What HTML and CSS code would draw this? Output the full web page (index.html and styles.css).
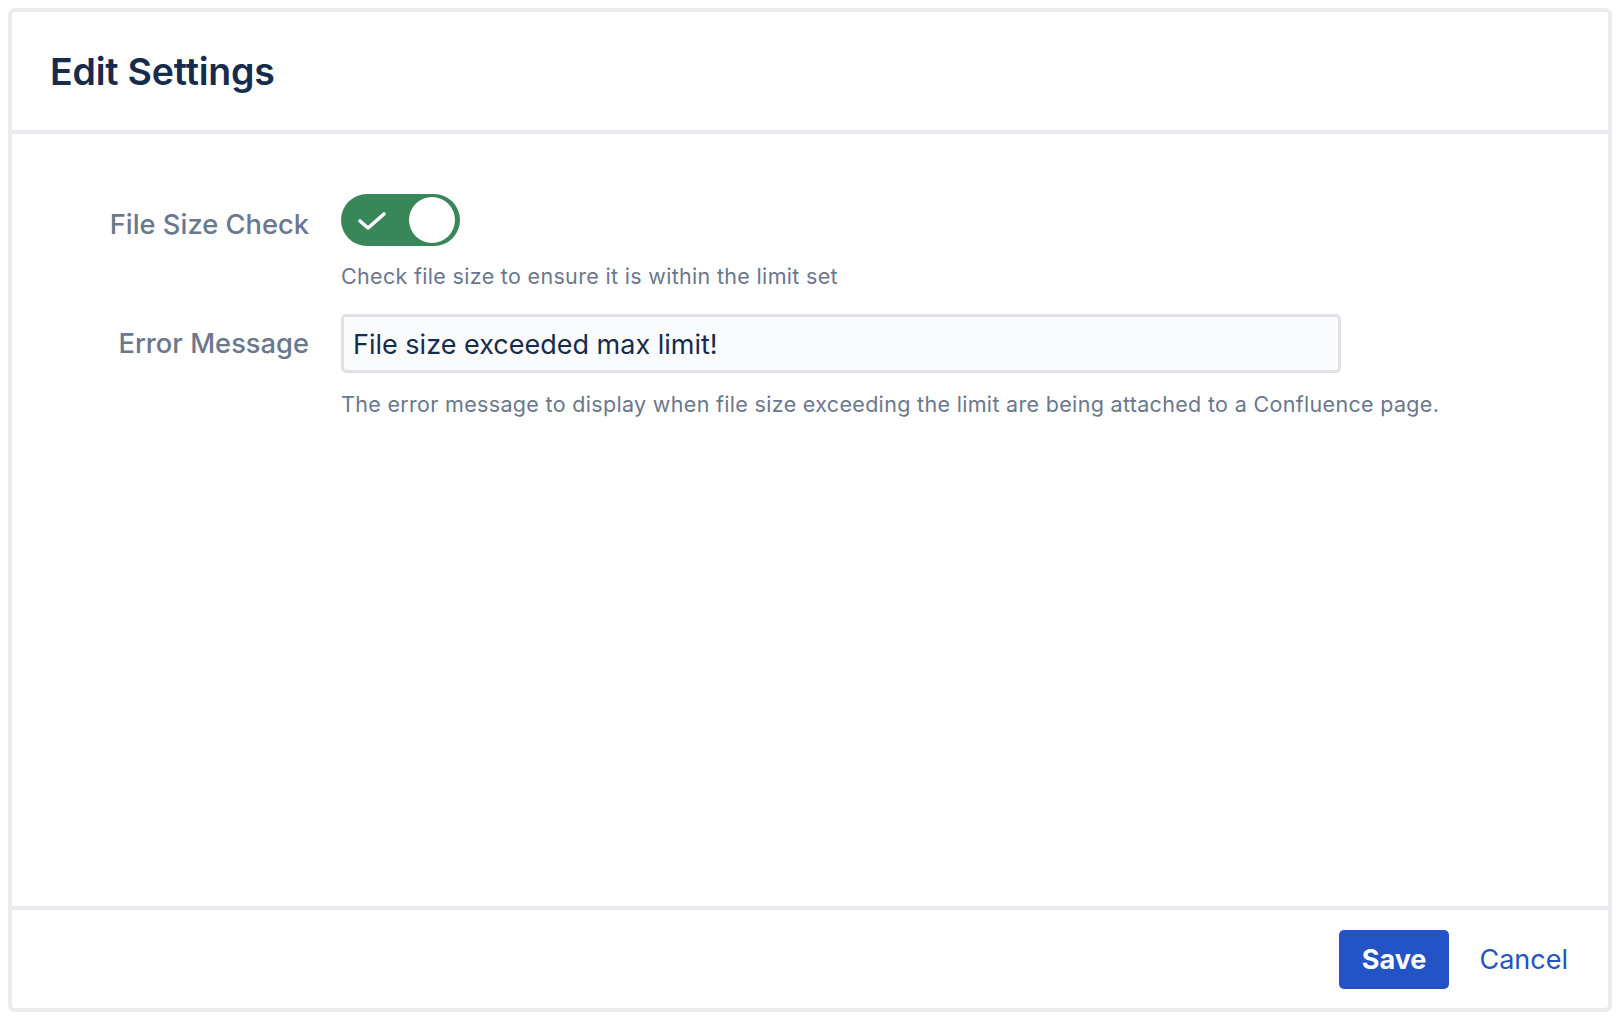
FILE: index.html
```html
<!DOCTYPE html>
<html lang="en">
<head>
<meta charset="utf-8">
<title>Edit Settings</title>
<link rel="stylesheet" href="styles.css">
</head>
<body>
<div class="modal">
  <header class="modal-header">
    <h1 class="modal-title">Edit Settings</h1>
  </header>
  <main class="modal-body">
    <div class="field">
      <div class="field-label field-label--toggle">File Size Check</div>
      <div class="field-control">
        <div class="toggle" role="switch" aria-checked="true">
          <svg class="toggle-check" width="30" height="20" viewBox="0 0 30 20" aria-hidden="true">
            <polyline points="3,10 11,17 27,3" fill="none" stroke="#ffffff" stroke-width="3.6" stroke-linecap="round" stroke-linejoin="round"/>
          </svg>
          <span class="toggle-knob"></span>
        </div>
        <p class="field-help field-help--first">Check file size to ensure it is within the limit set</p>
      </div>
    </div>
    <div class="field">
      <div class="field-label field-label--input">Error Message</div>
      <div class="field-control">
        <div class="text-input">File size exceeded max limit!</div>
        <p class="field-help field-help--second">The error message to display when file size exceeding the limit are being attached to a Confluence page.</p>
      </div>
    </div>
  </main>
  <footer class="modal-footer">
    <button class="btn btn-primary" type="button">Save</button>
    <button class="btn btn-link" type="button">Cancel</button>
  </footer>
</div>
</body>
</html>
```
FILE: styles.css
```css
html, body {
  height: 100%;
}
body {
  margin: 8px;
  height: calc(100% - 16px);
  font-family: Inter, "Noto Sans", "Liberation Sans", sans-serif;
  background: #ffffff;
  color: #172b4d;
}
.modal {
  box-sizing: border-box;
  height: 100%;
  border: 4px solid #ebecf0;
  border-radius: 7px;
  display: flex;
  flex-direction: column;
  background: #ffffff;
}
.modal-header {
  flex: none;
  box-sizing: border-box;
  height: 122px;
  border-bottom: 4px solid #ebecf0;
  display: flex;
  align-items: center;
  padding: 0 0 0 38px;
}
.modal-title {
  margin: 0;
  font-size: 37.5px;
  font-weight: 600;
  letter-spacing: -0.2px;
  color: #172b4d;
}
.modal-body {
  flex: 1;
  padding-top: 60px;
}
.field {
  display: grid;
  grid-template-columns: 297px 1fr;
  column-gap: 32px;
}
.field-label {
  display: flex;
  align-items: center;
  justify-content: flex-end;
  font-size: 27.3px;
  font-weight: 500;
  color: #6b778c;
}
.field-label--toggle {
  height: 52px;
  margin-top: 4px;
}
.field-label--input {
  height: 59px;
}
.field-control {
  display: flex;
  flex-direction: column;
  align-items: flex-start;
}
.toggle {
  box-sizing: border-box;
  width: 119px;
  height: 52px;
  border-radius: 26px;
  background: #398659;
  display: flex;
  align-items: center;
  justify-content: space-between;
  padding: 0 5px 0 16px;
}
.toggle-check {
  display: block;
  margin-top: 1px;
}
.toggle-knob {
  width: 46px;
  height: 46px;
  border-radius: 50%;
  background: #ffffff;
}
.field-help {
  margin: 0;
  font-size: 21.5px;
  line-height: 24px;
  color: #6b778c;
  letter-spacing: 0.32px;
  white-space: nowrap;
}
.field-help--first {
  margin-top: 18px;
  margin-bottom: 26px;
}
.field-help--second {
  margin-top: 19px;
}
.text-input {
  box-sizing: border-box;
  width: 1000px;
  height: 59px;
  border: 3px solid #dfe1e6;
  border-radius: 5px;
  background: #fafbfc;
  display: flex;
  align-items: center;
  padding: 2px 8px 0 9px;
  font-size: 27px;
  color: #172b4d;
}
.modal-footer {
  flex: none;
  box-sizing: border-box;
  height: 102px;
  border-top: 4px solid #ebecf0;
  display: flex;
  justify-content: flex-end;
  align-items: flex-start;
  padding: 20px 18px 0 0;
  gap: 8px;
}
.btn {
  height: 59px;
  padding: 0 22px;
  border: none;
  border-radius: 5px;
  font-family: inherit;
  font-size: 27px;
  cursor: pointer;
  background: transparent;
}
.btn-primary {
  background: #2353c5;
  color: #ffffff;
  font-weight: 700;
  padding: 0 23px;
}
.btn-link {
  color: #2353c5;
  font-weight: 400;
}
```
